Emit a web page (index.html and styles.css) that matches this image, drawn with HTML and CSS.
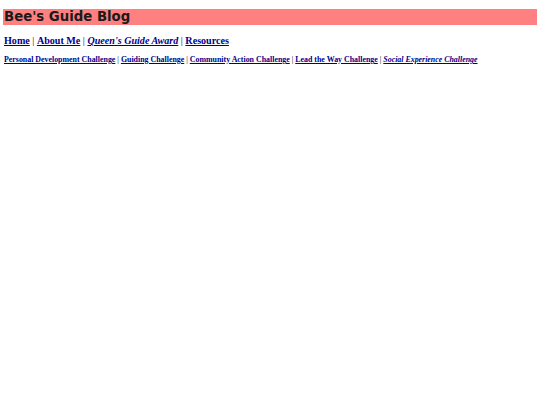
FILE: index.html
```html
<!DOCTYPE html>
<html>
<head>
<meta charset="utf-8">
<link rel="stylesheet" href="styles.css">
</head>
<body>
<h1 class="title">Bee's Guide Blog</h1>
<nav class="nav main">
<a href="#">Home</a> | <a href="#">About Me</a> | <a href="#" class="cur">Queen's Guide Award</a> | <a href="#">Resources</a>
</nav>
<nav class="nav sub">
<a href="#">Personal Development Challenge</a> | <a href="#">Guiding Challenge</a> | <a href="#">Community Action Challenge</a> | <a href="#">Lead the Way Challenge</a> | <a href="#" class="cur">Social Experience Challenge</a>
</nav>
</body>
</html>
```
FILE: styles.css
```css
body {
  margin: 9px 3px;
  font-family: "Liberation Serif", serif;
  background: #fff;
  color: #000;
}
.title {
  margin: 0;
  background: #ff8080;
  font-family: "DejaVu Sans", sans-serif;
  font-weight: bold;
  font-size: 13.3px;
  line-height: 16px;
  padding: 0 1px;
  color: #1a1a1a;
}
.nav {
  padding-left: 1px;
  white-space: nowrap;
}
.nav a {
  color: #00008b;
  font-weight: bold;
}
.nav a.cur {
  font-style: italic;
}
.main {
  font-size: 10.1px;
  line-height: 12px;
  margin-top: 10px;
}
.sub {
  font-size: 7.9px;
  line-height: 10px;
  margin-top: 8px;
}
```
